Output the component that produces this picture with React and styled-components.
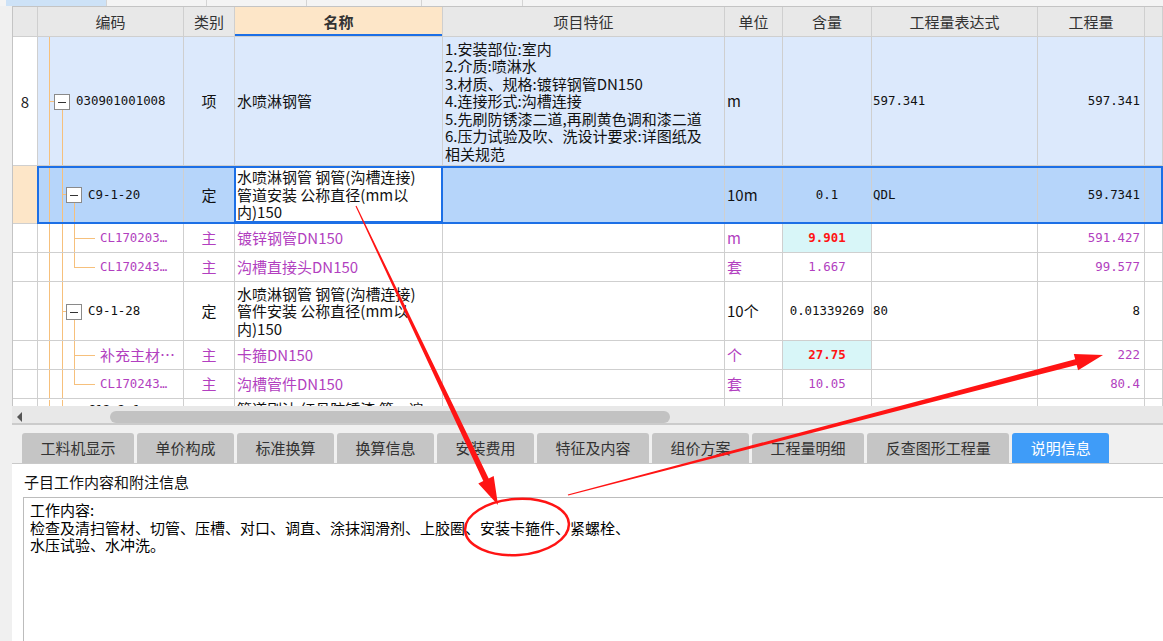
import React from "react";
import styled, { createGlobalStyle } from "styled-components";

const SANS = `"Noto Sans CJK SC", "Noto Sans", sans-serif`;
const MONO = `"DejaVu Sans Mono", "Liberation Mono", monospace`;
const LINE = "#cfcfcf";
const BLUE = "#1c6fe6";
const PEACH = "#fde6c8";
const PURPLE = "#b23fc0";
const TREE = "#f6c07c";
const RED = "#ff1414";

const GlobalStyle = createGlobalStyle`
  html, body { margin: 0; padding: 0; }
  body { width: 1163px; height: 641px; overflow: hidden; background: #f0f0f0; font-family: ${SANS}; }
`;

const Page = styled.div`
  position: relative;
  width: 1163px;
  height: 641px;
  overflow: hidden;
  display: flex;
  flex-direction: column;
  background: #f0f0f0;
  font-family: ${SANS};
  color: #111;
`;

const TopStrip = styled.div`
  height: 6px;
  flex: none;
  display: flex;
  padding-left: 6px;
  background: #f4f4f4;
`;

const StripTab = styled.div`
  width: ${(p) => p.$w}px;
  height: 6px;
  box-sizing: border-box;
  border-right: 1px solid #d4d4d4;
  background: ${(p) => (p.$active ? "#cde2f7" : "transparent")};
`;

const Body = styled.div`
  flex: 1;
  display: flex;
  min-height: 0;
`;

const Gutter = styled.div`
  width: 12px;
  flex: none;
  background: #f0f0f0;
`;

const Main = styled.div`
  flex: 1;
  display: flex;
  flex-direction: column;
  min-width: 0;
`;

const Grid = styled.div`
  height: 400px;
  flex: none;
  box-sizing: border-box;
  overflow: hidden;
  border-top: 1px solid #c4c4c4;
  border-left: 1px solid #c4c4c4;
  background: #fff;
`;

const Row = styled.div`
  display: flex;
  height: ${(p) => p.$h}px;
  flex: none;
`;

const NumCell = styled.div`
  width: 25px;
  flex: none;
  box-sizing: border-box;
  border-right: 1px solid ${LINE};
  border-bottom: 1px solid ${LINE};
  background: ${(p) => p.$bg || "#fff"};
  display: flex;
  align-items: center;
  justify-content: center;
  font-size: 15px;
  color: #222;
`;

const RowBody = styled.div`
  flex: 1;
  display: grid;
  grid-template-columns: 146px 51px 208px 282px 58px 89px 166px 107px 1fr;
  position: relative;
  background: ${(p) => p.$bg || "#fff"};
  min-width: 0;
  ${(p) =>
    p.$selected &&
    `
    &::after {
      content: "";
      position: absolute;
      left: -1px; top: 0; right: 0; bottom: 0;
      border: 2px solid ${BLUE};
      pointer-events: none;
    }
  `}
`;

const Cell = styled.div`
  box-sizing: border-box;
  min-width: 0;
  border-right: 1px solid ${LINE};
  border-bottom: 1px solid ${LINE};
  display: flex;
  align-items: ${(p) => (p.$top ? "flex-start" : "center")};
  justify-content: ${(p) =>
    p.$align === "center" ? "center" : p.$align === "right" ? "flex-end" : "flex-start"};
  padding: ${(p) => (p.$top ? "1px" : "0")} ${(p) => p.$padR ?? 2}px 0 ${(p) => p.$padL ?? 2}px;
  background: ${(p) => p.$bg || "transparent"};
  color: ${(p) => p.$color || "#111"};
  font-family: ${(p) => (p.$mono ? MONO : SANS)};
  font-size: ${(p) => (p.$mono ? "12.4px" : "15px")};
  font-weight: ${(p) => (p.$bold ? 700 : 400)};
  line-height: 17.5px;
  white-space: pre;
  overflow: ${(p) => (p.$edit ? "visible" : "hidden")};
  position: relative;
  ${(p) =>
    p.$edit &&
    `
    &::after {
      content: "";
      position: absolute;
      left: -1px; right: -1px; top: 0; bottom: 0;
      border: 2px solid ${BLUE};
      pointer-events: none;
    }
  `}
`;

const HeadCell = styled(Cell)`
  justify-content: center;
  background: ${(p) => (p.$accent ? PEACH : "#e8e8e8")};
  color: #333;
  font-weight: ${(p) => (p.$accent ? 700 : 400)};
  box-shadow: ${(p) => (p.$accent ? `inset 0 -2px 0 ${BLUE}` : "none")};
`;

const CodeText = styled.span`
  font-family: ${(p) => (p.$mono ? MONO : SANS)};
  font-size: ${(p) => (p.$mono ? "12.4px" : "15px")};
  color: ${(p) => p.$color || "#111"};
  white-space: nowrap;
`;

const HScroll = styled.div`
  height: 17px;
  flex: none;
  display: flex;
  align-items: flex-end;
  background: #e8e8e8;
  border-bottom: 2px solid #cbcbcb;
`;

const ScrollArrow = styled.div`
  width: 0;
  height: 0;
  margin: 0 0 1px 5px;
  border-top: 5px solid transparent;
  border-bottom: 5px solid transparent;
  border-right: 5px solid #555;
`;

const Thumb = styled.div`
  margin-left: 88px;
  width: 560px;
  height: 12px;
  border-radius: 6px;
  background: #c2c2c2;
`;

const TabBar = styled.div`
  height: 39px;
  flex: none;
  box-sizing: border-box;
  display: flex;
  align-items: flex-end;
  gap: 3px;
  padding-left: 10px;
  background: #f0f0f0;
  border-bottom: 1px solid #c9c9c9;
`;

const Tab = styled.div`
  height: 30px;
  padding: 0 18.5px;
  border-radius: 3px 3px 0 0;
  background: ${(p) => (p.$active ? "#3f9cf8" : "#c5c5c5")};
  color: ${(p) => (p.$active ? "#fff" : "#333")};
  font-size: 15px;
  line-height: 30px;
  white-space: nowrap;
`;

const Panel = styled.div`
  flex: 1;
  display: flex;
  flex-direction: column;
  background: #fff;
  padding: 9px 0 0 11px;
  min-height: 0;
`;

const PanelLabel = styled.div`
  margin-left: 1px;
  font-size: 15px;
  line-height: 17.5px;
  color: #111;
`;

const NoteBox = styled.div`
  flex: 1;
  margin-top: 6.5px;
  border-top: 1px solid #bcbcbc;
  border-left: 1px solid #bcbcbc;
  padding: 3px 6px;
  font-size: 15px;
  line-height: 17.5px;
  color: #000;
  white-space: pre;
`;

const Overlay = styled.svg`
  position: absolute;
  left: 0;
  top: 0;
  pointer-events: none;
  z-index: 10;
`;

function TreeGuide({ kind, h }) {
  const widths = { root: 38, def: 50, leaf: 62, leafLast: 62 };
  const w = widths[kind];
  const mid = Math.floor(h / 2) + 0.5;
  const boxTop = Math.floor(h / 2) - 7;
  const X0 = 11.5;
  const X1 = 24.5;
  const X2 = 36.5;
  const items = [];
  const v = (x, y1, y2, k) => items.push(<line key={k} x1={x} y1={y1} x2={x} y2={y2} stroke={TREE} />);
  const hz = (x1, x2, y, k) => items.push(<line key={k} x1={x1} y1={y} x2={x2} y2={y} stroke={TREE} />);
  const box = (bx, k) =>
    items.push(
      <g key={k}>
        <rect x={bx + 0.5} y={boxTop + 0.5} width="15" height="15" fill="#fff" stroke="#8a8a8a" />
        <line x1={bx + 4} y1={boxTop + 8.5} x2={bx + 12} y2={boxTop + 8.5} stroke="#333" />
      </g>
    );
  v(X0, 0, h, "l0");
  if (kind === "root") {
    hz(11, 16, mid, "s");
    v(X1, boxTop + 16, h, "l1");
    box(16, "b");
  } else if (kind === "def") {
    v(X1, 0, h, "l1");
    hz(24, 28, mid, "s");
    v(X2, boxTop + 16, h, "l2");
    box(28, "b");
  } else {
    v(X1, 0, h, "l1");
    v(X2, 0, kind === "leaf" ? h : mid, "l2");
    hz(36, 57, mid, "s");
  }
  return (
    <svg width={w} height={h} style={{ flex: "none", display: "block" }}>
      {items}
    </svg>
  );
}

function arrowPoly(x1, y1, x2, y2, w1, w2, headLen, headW) {
  const dx = x2 - x1;
  const dy = y2 - y1;
  const L = Math.hypot(dx, dy);
  const ux = dx / L;
  const uy = dy / L;
  const px = -uy;
  const py = ux;
  const bx = x2 - ux * headLen;
  const by = y2 - uy * headLen;
  const pts = [
    [x1 + (px * w1) / 2, y1 + (py * w1) / 2],
    [bx + (px * w2) / 2, by + (py * w2) / 2],
    [bx + (px * headW) / 2, by + (py * headW) / 2],
    [x2, y2],
    [bx - (px * headW) / 2, by - (py * headW) / 2],
    [bx - (px * w2) / 2, by - (py * w2) / 2],
    [x1 - (px * w1) / 2, y1 - (py * w1) / 2],
  ];
  return pts.map((p) => p.map((n) => n.toFixed(1)).join(",")).join(" ");
}

const rows = [
  {
    h: 129, num: "8", bg: "#dce9fc", tree: "root", code: "030901001008", codeMono: true,
    type: "项", name: "水喷淋钢管",
    feat: "1.安装部位:室内\n2.介质:喷淋水\n3.材质、规格:镀锌钢管DN150\n4.连接形式:沟槽连接\n5.先刷防锈漆二道,再刷黄色调和漆二道\n6.压力试验及吹、洗设计要求:详图纸及\n相关规范",
    unit: "m", qty: "", expr: "597.341", amount: "597.341",
  },
  {
    h: 58, num: "", numBg: PEACH, selected: true, bg: "#b6d5fa", tree: "def", code: "C9-1-20", codeMono: true,
    type: "定", name: "水喷淋钢管 钢管(沟槽连接)\n管道安装 公称直径(mm以\n内)150", nameEdit: true,
    unit: "10m", qty: "0.1", expr: "QDL", amount: "59.7341",
  },
  {
    h: 29, purple: true, tree: "leaf", code: "CL170203…", codeMono: true,
    type: "主", name: "镀锌钢管DN150", unit: "m", qty: "9.901", hot: true, expr: "", amount: "591.427",
  },
  {
    h: 29, purple: true, tree: "leafLast", code: "CL170243…", codeMono: true,
    type: "主", name: "沟槽直接头DN150", unit: "套", qty: "1.667", expr: "", amount: "99.577",
  },
  {
    h: 59, tree: "def", code: "C9-1-28", codeMono: true,
    type: "定", name: "水喷淋钢管 钢管(沟槽连接)\n管件安装 公称直径(mm以\n内)150",
    unit: "10个", qty: "0.01339269", expr: "80", amount: "8",
  },
  {
    h: 29, purple: true, tree: "leaf", code: "补充主材…", codeMono: false,
    type: "主", name: "卡箍DN150", unit: "个", qty: "27.75", hot: true, expr: "", amount: "222",
  },
  {
    h: 29, purple: true, tree: "leafLast", code: "CL170243…", codeMono: true,
    type: "主", name: "沟槽管件DN150", unit: "套", qty: "10.05", expr: "", amount: "80.4",
  },
  {
    h: 59, tree: "def", code: "C12-2-1", codeMono: true, top: true,
    type: "", name: "管道刷油 红丹防锈漆 第一遍", unit: "", qty: "", expr: "", amount: "",
  },
];

const headers = ["编码", "类别", "名称", "项目特征", "单位", "含量", "工程量表达式", "工程量", ""];

const tabs = ["工料机显示", "单价构成", "标准换算", "换算信息", "安装费用", "特征及内容", "组价方案", "工程量明细", "反查图形工程量", "说明信息"];

function DataRow({ r }) {
  const color = r.purple ? PURPLE : "#111";
  return (
    <Row $h={r.h}>
      <NumCell $bg={r.numBg}>{r.num}</NumCell>
      <RowBody $bg={r.bg} $selected={r.selected}>
        <Cell $padL={0} $top={r.top}>
          <TreeGuide kind={r.tree} h={r.h - 1} />
          <CodeText $mono={r.codeMono} $color={color} style={r.top ? { marginTop: 1 } : undefined}>
            {r.code}
          </CodeText>
        </Cell>
        <Cell $align="center" $color={color} $top={r.top}>{r.type}</Cell>
        <Cell $color={color} $bg={r.nameEdit ? "#fff" : undefined} $edit={r.nameEdit} $top={r.top}>
          {r.name}
        </Cell>
        <Cell $color={color} $top={r.top}>{r.feat || ""}</Cell>
        <Cell $color={color} $top={r.top}>{r.unit}</Cell>
        <Cell
          $align="center"
          $mono
          $bold={r.hot}
          $color={r.hot ? RED : color}
          $bg={r.hot ? "#d8f6f8" : undefined}
          $top={r.top}
        >
          {r.qty}
        </Cell>
        <Cell $mono $padL={1} $color={color} $top={r.top}>{r.expr}</Cell>
        <Cell $mono $align="right" $padR={4} $color={color} $top={r.top}>{r.amount}</Cell>
        <Cell $top={r.top} />
      </RowBody>
    </Row>
  );
}

export default function App() {
  return (
    <>
      <GlobalStyle />
      <Page>
        <TopStrip>
          <StripTab $w={101} $active />
          <StripTab $w={100} />
          <StripTab $w={100} />
          <StripTab $w={115} />
          <StripTab $w={101} />
        </TopStrip>
        <Body>
          <Gutter />
          <Main>
            <Grid>
              <Row $h={30}>
                <NumCell $bg="#e8e8e8" />
                <RowBody $bg="#e8e8e8">
                  {headers.map((h, i) => (
                    <HeadCell key={i} $accent={h === "名称"}>
                      {h}
                    </HeadCell>
                  ))}
                </RowBody>
              </Row>
              {rows.map((r, i) => (
                <DataRow key={i} r={r} />
              ))}
            </Grid>
            <HScroll>
              <ScrollArrow />
              <Thumb />
            </HScroll>
            <TabBar>
              {tabs.map((t) => (
                <Tab key={t} $active={t === "说明信息"}>
                  {t}
                </Tab>
              ))}
            </TabBar>
            <Panel>
              <PanelLabel>子目工作内容和附注信息</PanelLabel>
              <NoteBox>
                {"工作内容:\n检查及清扫管材、切管、压槽、对口、调直、涂抹润滑剂、上胶圈、安装卡箍件、紧螺栓、\n水压试验、水冲洗。"}
              </NoteBox>
            </Panel>
          </Main>
        </Body>
        <Overlay width="1163" height="641" viewBox="0 0 1163 641">
          <polygon points={arrowPoly(356, 206, 498, 505, 1.2, 6, 28, 17)} fill={RED} />
          <polygon points={arrowPoly(568, 495, 1103, 355, 1.2, 6, 28, 17)} fill={RED} />
          <ellipse
            cx="517"
            cy="527"
            rx="52"
            ry="28"
            fill="none"
            stroke={RED}
            strokeWidth="2.5"
            transform="rotate(-4 517 527)"
          />
        </Overlay>
      </Page>
    </>
  );
}
